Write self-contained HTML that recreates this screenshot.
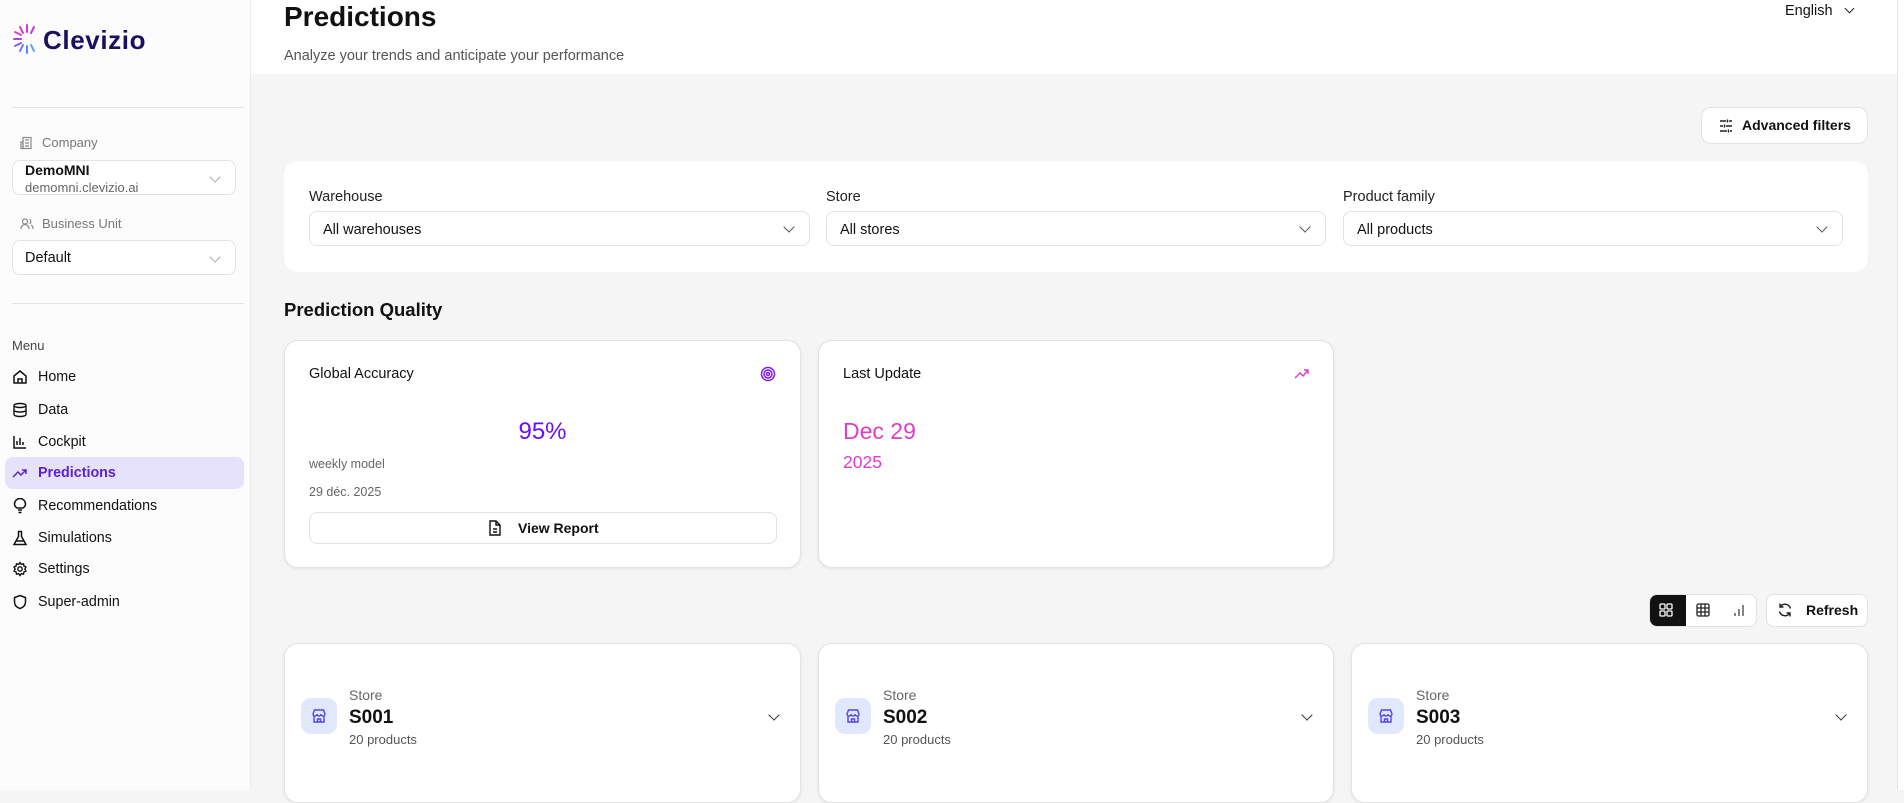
<!DOCTYPE html>
<html><head><meta charset="utf-8"><style>
*{box-sizing:border-box;margin:0;padding:0}
body{width:1904px;height:790px;overflow:hidden;font-family:"Liberation Sans",sans-serif;background:#f5f5f5;color:#111;position:relative}
.abs{position:absolute}
.side{left:0;top:0;width:251px;height:790px;background:#fcfcfc;border-right:1px solid #ececec}
.hdr{left:251px;top:0;width:1653px;height:74px;background:#fff}
.sel{background:#fff;border:1px solid #e2e2e2;border-radius:8px}
.chev{position:absolute;width:8px;height:8px;border-right:1.5px solid #777;border-bottom:1.5px solid #777;transform:rotate(45deg)}
.nav{position:absolute;left:12px;font-size:14.3px;color:#111;display:flex;align-items:center;gap:10px}
.nav svg{width:16px;height:16px}
.card{background:#fff;border:1px solid #e3e3e3;border-radius:14px;box-shadow:0 1px 3px rgba(0,0,0,.08)}
.lbl{font-size:14.5px;color:#222}
.selv{font-size:14.5px;color:#111;padding:10px 13px}
</style></head><body>
<div class="abs side"></div>
<div class="abs hdr"></div>
<div class="abs" style="left:1897px;top:0;width:7px;height:790px;background:#fff;border-left:1px solid #e5e5e5"></div>

<svg class="abs" style="left:12px;top:22px" width="30" height="32" viewBox="0 0 30 32">
<g stroke-width="2" stroke-linecap="round">
<line x1="15" y1="3" x2="15" y2="10" stroke="#d13bd6"/>
<line x1="22" y1="5" x2="19" y2="11" stroke="#c03be0"/>
<line x1="8" y1="5" x2="11" y2="11" stroke="#e03bc6"/>
<line x1="3" y1="10" x2="9" y2="13" stroke="#e040c0"/>
<line x1="2" y1="17" x2="9" y2="17" stroke="#b040e0"/>
<line x1="3" y1="24" x2="9" y2="21" stroke="#8a5cf0"/>
<line x1="8" y1="29" x2="11" y2="23" stroke="#6a7cf5"/>
<line x1="15" y1="31" x2="15" y2="24" stroke="#5b8af5"/>
<line x1="22" y1="29" x2="19" y2="23" stroke="#6aa0f5"/>
</g></svg>
<div class="abs" style="left:43px;top:25px;font-size:26px;font-weight:bold;color:#1b1060;letter-spacing:0.6px">Clevizio</div>

<div class="abs" style="left:12px;top:107px;width:232px;height:1px;background:#e3e3e3"></div>
<svg class="abs" style="left:20px;top:136px" width="14" height="14" viewBox="0 0 14 14" fill="none" stroke="#888" stroke-width="1.2"><rect x="3" y="1.5" width="8" height="11"/><path d="M1 6h2v6.5H1zM5 4h4M5 7h4M5 10h4"/></svg>
<div class="abs" style="left:42px;top:135px;font-size:13px;color:#777">Company</div>
<div class="abs sel" style="left:12px;top:160px;width:224px;height:35px"></div>
<div class="abs" style="left:25px;top:162px;font-size:14px;font-weight:bold">DemoMNI</div>
<div class="abs" style="left:25px;top:180px;font-size:13px;color:#666">demomni.clevizio.ai</div>
<div class="chev" style="left:211px;top:173px;border-color:#aaa"></div>
<svg class="abs" style="left:20px;top:217px" width="14" height="14" viewBox="0 0 14 14" fill="none" stroke="#888" stroke-width="1.2"><circle cx="5" cy="4.5" r="2.5"/><path d="M1 12c0-3 2-4.5 4-4.5s4 1.5 4 4.5M9.5 2.5a2.3 2.3 0 010 4.2M11 8c1.5.6 2 2 2 4"/></svg>
<div class="abs" style="left:42px;top:216px;font-size:13px;color:#777">Business Unit</div>
<div class="abs sel" style="left:12px;top:240px;width:224px;height:35px"></div>
<div class="abs" style="left:25px;top:250px;font-size:14.5px">Default</div>
<div class="chev" style="left:211px;top:253px;border-color:#aaa"></div>
<div class="abs" style="left:12px;top:303px;width:232px;height:1px;background:#e3e3e3"></div>
<div class="abs" style="left:12px;top:338px;font-size:13px;color:#444">Menu</div>

<div class="abs" style="left:5px;top:457px;width:239px;height:32px;background:#e6e2fc;border-radius:8px"></div>
<div class="nav" style="top:369px"><svg viewBox="0 0 16 16" fill="none" stroke="#111" stroke-width="1.5"><path d="M2 7l6-5 6 5v7H2zM6 14v-4h4v4"/></svg>Home</div>
<div class="nav" style="top:402px"><svg viewBox="0 0 16 16" fill="none" stroke="#111" stroke-width="1.4"><ellipse cx="8" cy="3.5" rx="6" ry="2"/><path d="M2 3.5v9c0 1.1 2.7 2 6 2s6-.9 6-2v-9M2 8c0 1.1 2.7 2 6 2s6-.9 6-2"/></svg>Data</div>
<div class="nav" style="top:434px"><svg viewBox="0 0 16 16" fill="none" stroke="#111" stroke-width="1.5"><path d="M2 2v12h12M5 11V7M8 11V4M11 11V8"/></svg>Cockpit</div>
<div class="nav" style="top:465px;color:#5b21d6;font-weight:bold"><svg viewBox="0 0 16 16" fill="none" stroke="#5b21d6" stroke-width="1.5"><path d="M1 12l5-5 3 3 5-5M10 5h4v4"/></svg>Predictions</div>
<div class="nav" style="top:498px"><svg viewBox="0 0 16 16" fill="none" stroke="#111" stroke-width="1.5"><path d="M6 12h4M6.5 14.5h3M5 10c-1.5-1-2.5-2.5-2.5-4a5.5 5.5 0 0111 0c0 1.5-1 3-2.5 4z"/></svg>Recommendations</div>
<div class="nav" style="top:530px"><svg viewBox="0 0 16 16" fill="none" stroke="#111" stroke-width="1.5"><path d="M6 1.5h4M6.5 1.5v5L2 14.5h12L9.5 6.5v-5M4 11h8"/></svg>Simulations</div>
<div class="nav" style="top:561px"><svg viewBox="0 0 16 16" fill="none" stroke="#111" stroke-width="1.4"><circle cx="8" cy="8" r="2.2"/><path d="M8 1.5l1.3 1.8 2.2-.5.4 2.2 2 1-1 2 1 2-2 1-.4 2.2-2.2-.5L8 14.5l-1.3-1.8-2.2.5-.4-2.2-2-1 1-2-1-2 2-1 .4-2.2 2.2.5z"/></svg>Settings</div>
<div class="nav" style="top:594px"><svg viewBox="0 0 16 16" fill="none" stroke="#111" stroke-width="1.5"><path d="M8 1.5l5.5 2v4.5c0 3.5-2.5 5.5-5.5 6.5C5 13.5 2.5 11.5 2.5 8V3.5z"/></svg>Super-admin</div>

<div class="abs" style="left:284px;top:1px;font-size:28px;font-weight:bold">Predictions</div>
<div class="abs" style="left:284px;top:48px;font-size:14.5px;color:#555">Analyze your trends and anticipate your performance</div>
<div class="abs" style="left:1785px;top:3px;font-size:14.5px">English</div>
<div class="chev" style="left:1846px;top:5px;width:7px;height:7px;border-color:#222"></div>

<div class="abs sel" style="left:1701px;top:107px;width:167px;height:37px;border-radius:10px"></div>
<svg class="abs" style="left:1718px;top:118px" width="16" height="16" viewBox="0 0 16 16" fill="none" stroke="#222" stroke-width="1.4"><path d="M2 3h6M11 3h3M2 8h3M8 8h6M2 13h7M12 13h2M9.5 1.5v3M6.5 6.5v3M10.5 11.5v3"/></svg>
<div class="abs" style="left:1742px;top:117px;font-size:14px;font-weight:bold;color:#111">Advanced filters</div>

<div class="abs card" style="left:284px;top:161px;width:1584px;height:111px;border:none;box-shadow:none"></div>
<div class="abs lbl" style="left:309px;top:189px">Warehouse</div>
<div class="abs lbl" style="left:826px;top:189px">Store</div>
<div class="abs lbl" style="left:1343px;top:189px">Product family</div>
<div class="abs sel" style="left:309px;top:211px;width:501px;height:35px"><div class="selv">All warehouses</div><div class="chev" style="right:16px;top:11px;border-color:#555"></div></div>
<div class="abs sel" style="left:826px;top:211px;width:500px;height:35px"><div class="selv">All stores</div><div class="chev" style="right:16px;top:11px;border-color:#555"></div></div>
<div class="abs sel" style="left:1343px;top:211px;width:500px;height:35px"><div class="selv">All products</div><div class="chev" style="right:16px;top:11px;border-color:#555"></div></div>

<div class="abs" style="left:284px;top:299px;font-size:18.5px;font-weight:bold">Prediction Quality</div>

<div class="abs card" style="left:284px;top:340px;width:517px;height:228px"></div>
<div class="abs" style="left:309px;top:366px;font-size:14.5px">Global Accuracy</div>
<svg class="abs" style="left:760px;top:366px" width="16" height="16" viewBox="0 0 16 16" fill="none" stroke="#7c1cf0" stroke-width="1.5"><circle cx="8" cy="8" r="6.5"/><circle cx="8" cy="8" r="4"/><circle cx="8" cy="8" r="1.5"/></svg>
<div class="abs" style="left:284px;top:418px;width:517px;text-align:center;font-size:24px;color:#6a10f5">95%</div>
<div class="abs" style="left:309px;top:457px;font-size:12.5px;color:#666">weekly model</div>
<div class="abs" style="left:309px;top:485px;font-size:12.5px;color:#666">29 déc. 2025</div>
<div class="abs sel" style="left:309px;top:512px;width:468px;height:32px"></div>
<svg class="abs" style="left:488px;top:520px" width="14" height="16" viewBox="0 0 14 16" fill="none" stroke="#111" stroke-width="1.4"><path d="M2 1h6l4 4v10H2zM8 1v4h4M5 9h4M5 12h4"/></svg>
<div class="abs" style="left:518px;top:520px;font-size:14px;font-weight:bold">View Report</div>

<div class="abs card" style="left:818px;top:340px;width:516px;height:228px"></div>
<div class="abs" style="left:843px;top:366px;font-size:14.5px">Last Update</div>
<svg class="abs" style="left:1294px;top:368px" width="16" height="12" viewBox="0 0 16 12" fill="none" stroke="#e03cc6" stroke-width="1.4"><path d="M1 10l5-5 3 3 5-6M10 2h4v4"/></svg>
<div class="abs" style="left:843px;top:418px;font-size:23px;color:#e03cc6">Dec 29</div>
<div class="abs" style="left:843px;top:452px;font-size:17.5px;color:#e03cc6">2025</div>

<div class="abs sel" style="left:1649px;top:594px;width:108px;height:33px;border-radius:8px;overflow:hidden"><div style="width:36px;height:33px;background:#111"></div></div>
<svg class="abs" style="left:1659px;top:603px" width="14" height="14" viewBox="0 0 14 14" fill="none" stroke="#fff" stroke-width="1.3"><rect x="1" y="1" width="5" height="5" rx="1"/><rect x="8" y="1" width="5" height="5" rx="1"/><rect x="1" y="8" width="5" height="5" rx="1"/><rect x="8" y="8" width="5" height="5" rx="1"/></svg>
<svg class="abs" style="left:1696px;top:603px" width="14" height="14" viewBox="0 0 14 14" fill="none" stroke="#222" stroke-width="1.3"><rect x="1" y="1" width="12" height="12" rx="1.5"/><path d="M1 5h12M1 9h12M5 1v12M9 1v12"/></svg>
<svg class="abs" style="left:1732px;top:603px" width="14" height="14" viewBox="0 0 14 14" fill="none" stroke="#444" stroke-width="1.3"><path d="M3 13v-3M7 13V6M11 13V2"/></svg>
<div class="abs sel" style="left:1766px;top:594px;width:102px;height:33px;border-radius:8px"></div>
<svg class="abs" style="left:1777px;top:602px" width="16" height="16" viewBox="0 0 16 16" fill="none" stroke="#222" stroke-width="1.4"><path d="M13.5 6.5A5.8 5.8 0 003 5M2.5 9.5A5.8 5.8 0 0013 11M3 1.5V5h3.5M13 14.5V11H9.5"/></svg>
<div class="abs" style="left:1806px;top:602px;font-size:14px;font-weight:bold">Refresh</div>

<div class="abs card" style="left:284px;top:643px;width:517px;height:160px"></div>
<div class="abs card" style="left:818px;top:643px;width:516px;height:160px"></div>
<div class="abs card" style="left:1351px;top:643px;width:517px;height:160px"></div>

<div class="abs" style="left:301px;top:698px;width:36px;height:36px;border-radius:10px;background:#e1e7fd"></div>
<div class="abs" style="left:835px;top:698px;width:36px;height:36px;border-radius:10px;background:#e1e7fd"></div>
<div class="abs" style="left:1368px;top:698px;width:36px;height:36px;border-radius:10px;background:#e1e7fd"></div>
<svg class="abs" style="left:311px;top:708px" width="16" height="16" viewBox="0 0 16 16" fill="none" stroke="#4f46e5" stroke-width="1.4"><path d="M2 6l1.5-4h9L14 6c0 1.2-1 2-2 2s-2-.8-2-2c0 1.2-1 2-2 2s-2-.8-2-2c0 1.2-1 2-2 2s-2-.8-2-2zM3 8v6h10V8M6.5 14v-3h3v3"/></svg>
<svg class="abs" style="left:845px;top:708px" width="16" height="16" viewBox="0 0 16 16" fill="none" stroke="#4f46e5" stroke-width="1.4"><path d="M2 6l1.5-4h9L14 6c0 1.2-1 2-2 2s-2-.8-2-2c0 1.2-1 2-2 2s-2-.8-2-2c0 1.2-1 2-2 2s-2-.8-2-2zM3 8v6h10V8M6.5 14v-3h3v3"/></svg>
<svg class="abs" style="left:1378px;top:708px" width="16" height="16" viewBox="0 0 16 16" fill="none" stroke="#4f46e5" stroke-width="1.4"><path d="M2 6l1.5-4h9L14 6c0 1.2-1 2-2 2s-2-.8-2-2c0 1.2-1 2-2 2s-2-.8-2-2c0 1.2-1 2-2 2s-2-.8-2-2zM3 8v6h10V8M6.5 14v-3h3v3"/></svg>

<div class="abs" style="left:349px;top:687px;font-size:14px;color:#666">Store</div>
<div class="abs" style="left:349px;top:707px;font-size:19px;font-weight:bold">S001</div>
<div class="abs" style="left:349px;top:732px;font-size:13px;color:#555">20 products</div>
<div class="chev" style="left:770px;top:711px;border-color:#333"></div>
<div class="abs" style="left:883px;top:687px;font-size:14px;color:#666">Store</div>
<div class="abs" style="left:883px;top:707px;font-size:19px;font-weight:bold">S002</div>
<div class="abs" style="left:883px;top:732px;font-size:13px;color:#555">20 products</div>
<div class="chev" style="left:1303px;top:711px;border-color:#333"></div>
<div class="abs" style="left:1416px;top:687px;font-size:14px;color:#666">Store</div>
<div class="abs" style="left:1416px;top:707px;font-size:19px;font-weight:bold">S003</div>
<div class="abs" style="left:1416px;top:732px;font-size:13px;color:#555">20 products</div>
<div class="chev" style="left:1837px;top:711px;border-color:#333"></div>
</body></html>
